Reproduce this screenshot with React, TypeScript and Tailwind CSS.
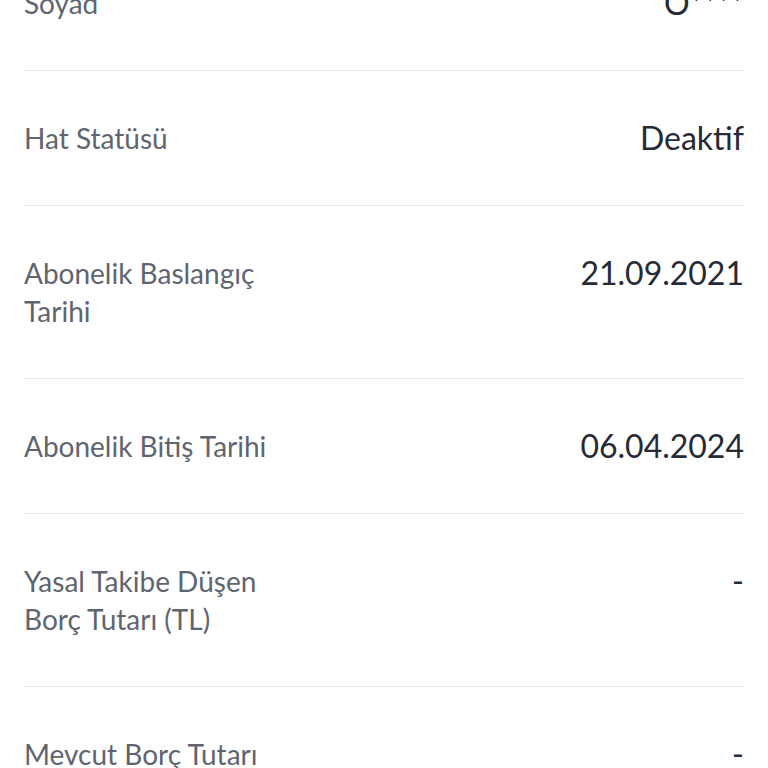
import React from "react";

type Row = { label: string; value: string };

const rows: Row[] = [
  { label: "Soyad", value: "O****" },
  { label: "Hat Statüsü", value: "Deaktif" },
  { label: "Abonelik Baslangıç Tarihi", value: "21.09.2021" },
  { label: "Abonelik Bitiş Tarihi", value: "06.04.2024" },
  { label: "Yasal Takibe Düşen Borç Tutarı (TL)", value: "-" },
  { label: "Mevcut Borç Tutarı (TL)", value: "-" },
];

export default function App() {
  return (
    <div className="h-[768px] overflow-hidden bg-white font-['Lato','Noto_Sans',sans-serif]">
      <div className="mt-[-64px] px-6">
        {rows.map((row, i) => (
          <div
            key={row.label}
            className={`flex items-start justify-between py-12 ${i > 0 ? "border-t border-[#e6e8eb]" : ""}`}
          >
            <div className="w-[280px] text-[28px] leading-[38px] text-[#5f6570]">{row.label}</div>
            <div className="text-[32px] leading-[38px] text-[#262a36]">{row.value}</div>
          </div>
        ))}
      </div>
    </div>
  );
}
